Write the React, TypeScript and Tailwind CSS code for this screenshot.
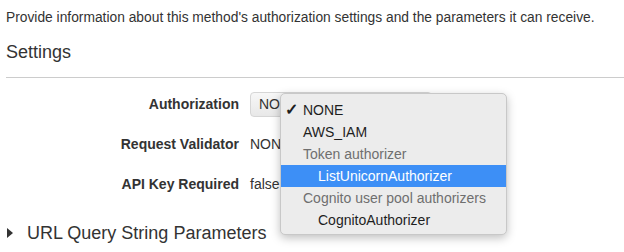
import React from 'react'

const options = [
  { label: 'NONE', kind: 'item', checked: true },
  { label: 'AWS_IAM', kind: 'item' },
  { label: 'Token authorizer', kind: 'group' },
  { label: 'ListUnicornAuthorizer', kind: 'sub', active: true },
  { label: 'Cognito user pool authorizers', kind: 'group' },
  { label: 'CognitoAuthorizer', kind: 'sub' },
]

const App = () => {
  return (
    <div className="w-[624px] h-[252px] overflow-hidden bg-white text-[#333] font-['Liberation_Sans',Arial,sans-serif]">
      <div className="pl-[6px] pt-[10px]">
        <p className="text-[13.8px] leading-[16px]">
          Provide information about this method's authorization settings and the parameters it can receive.
        </p>
        <h2 className="mt-[16px] text-[18px] leading-[20px]">Settings</h2>
      </div>
      <div className="mt-[15px] ml-[6px] border-t border-[#ccc]" />

      <div className="relative mt-[14px]">
        <div className="grid grid-cols-[239px_1fr] gap-x-[11px] items-center text-[14px]">
          <div className="text-right font-bold h-[25px] leading-[25px]">Authorization</div>
          <div>
            <div className="w-[182px] h-[25px] rounded-[4px] border border-[#d6d6d6] bg-gradient-to-b from-[#f7f7f7] to-[#e8e8e8] pl-[8px] leading-[23px]">
              NONE
            </div>
          </div>

          <div className="text-right font-bold mt-[19px] h-[16px] leading-[16px]">Request Validator</div>
          <div className="mt-[19px] leading-[16px]">NONE</div>

          <div className="text-right font-bold mt-[24px] h-[16px] leading-[16px]">API Key Required</div>
          <div className="mt-[24px] leading-[16px]">false</div>
        </div>

        <div className="absolute left-[280px] top-[1px] w-[227px] rounded-[5px] border border-[#c8c8c8] bg-[#ececec] pt-[5px] pb-[3px] shadow-[0_3px_10px_rgba(0,0,0,0.25)] text-[14px]">
          {options.map((o) => (
            <div
              key={o.label}
              className={
                'relative h-[22px] leading-[22px] ' +
                (o.kind === 'sub' ? 'pl-[37px] ' : 'pl-[22px] ') +
                (o.active ? 'bg-[#3d8ff6] text-white ' : o.kind === 'group' ? 'text-[#6f6f6f] ' : 'text-[#1e1e1e] ')
              }
            >
              {o.checked && <span className="absolute left-[4px] top-0 text-[16px] font-bold">✓</span>}
              {o.label}
            </div>
          ))}
        </div>
      </div>

      <div className="mt-[31px] flex items-center pl-[7px] text-[18px] leading-[20px]">
        <svg width="6" height="10" viewBox="0 0 6 10" className="mr-[14px]">
          <path d="M0 0 L6 5 L0 10 Z" fill="#333" />
        </svg>
        <span>URL Query String Parameters</span>
      </div>
    </div>
  )
}

export default App
